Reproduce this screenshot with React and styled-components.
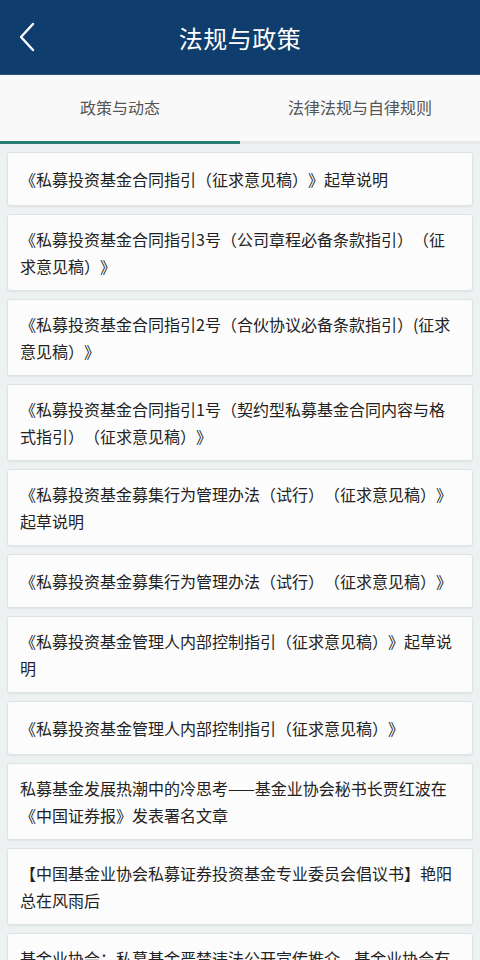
import { useState } from 'react'
import styled, { createGlobalStyle } from 'styled-components'

const GlobalStyle = createGlobalStyle`
  html, body {
    margin: 0;
    padding: 0;
    background: #eef1f1;
  }
  * {
    box-sizing: border-box;
  }
  body {
    font-family: "Noto Sans CJK SC", "Noto Sans", "Liberation Sans", sans-serif;
    text-spacing-trim: space-all;
  }
`

const Page = styled.div`
  width: 480px;
  min-height: 960px;
  display: flex;
  flex-direction: column;
  background: #eef1f1;
`

const Header = styled.header`
  height: 75px;
  background: #0f3e6e;
  display: flex;
  align-items: center;
  justify-content: center;
  position: relative;
  border-bottom: 1px solid #2a5580;
`

const BackButton = styled.button`
  position: absolute;
  left: 12px;
  top: 50%;
  transform: translateY(-50%);
  width: 32px;
  height: 40px;
  border: none;
  background: none;
  padding: 0;
  display: flex;
  align-items: center;
  justify-content: center;
  cursor: pointer;
`

const Title = styled.h1`
  margin: 0;
  color: #ffffff;
  font-size: 24px;
  font-weight: 400;
  letter-spacing: 0.5px;
`

const Tabs = styled.div`
  height: 69px;
  display: flex;
  background: #f9f9f9;
`

const Tab = styled.button`
  flex: 1;
  border: none;
  background: none;
  font-family: inherit;
  font-size: 16px;
  color: #555;
  display: flex;
  align-items: center;
  justify-content: center;
  position: relative;
  padding: 0 0 3px;
  border-bottom: 3px solid ${(p) => (p.$active ? '#2b7f76' : '#e6e9e9')};
  cursor: pointer;

  & + &::before {
    content: '';
    position: absolute;
    left: 0;
    top: 14px;
    bottom: 10px;
    width: 1px;
    background: #dcdfdf;
  }
`

const List = styled.div`
  display: flex;
  flex-direction: column;
  gap: 8px;
  padding: 8px 7px 8px 7px;
`

const Card = styled.div`
  min-height: 54px;
  background: #fcfcfc;
  border: 1px solid #dfe3e3;
  border-radius: 3px;
  box-shadow: 0 1px 2px rgba(0, 0, 0, 0.06);
  padding: 11px 20px 11px 12px;
  display: flex;
  align-items: center;
  font-size: 16px;
  line-height: 26.5px;
  color: #222;
  text-spacing-trim: space-all;
`

const items = [
  '《私募投资基金合同指引（征求意见稿）》起草说明',
  '《私募投资基金合同指引3号（公司章程必备条款指引）（征求意见稿）》',
  '《私募投资基金合同指引2号（合伙协议必备条款指引）(征求意见稿）》',
  '《私募投资基金合同指引1号（契约型私募基金合同内容与格式指引）（征求意见稿）》',
  '《私募投资基金募集行为管理办法（试行）（征求意见稿）》起草说明',
  '《私募投资基金募集行为管理办法（试行）（征求意见稿）》',
  '《私募投资基金管理人内部控制指引（征求意见稿）》起草说明',
  '《私募投资基金管理人内部控制指引（征求意见稿）》',
  '私募基金发展热潮中的冷思考——基金业协会秘书长贾红波在《中国证券报》发表署名文章',
  '【中国基金业协会私募证券投资基金专业委员会倡议书】艳阳总在风雨后',
  '基金业协会：私募基金严禁违法公开宣传推介—基金业协会有关负责人答记者问',
]

const ChevronLeft = () => (
  <svg width="20" height="30" viewBox="0 0 20 30" fill="none">
    <polyline
      points="15,2 3,15 15,28"
      stroke="#ffffff"
      strokeWidth="2.4"
      strokeLinecap="round"
      strokeLinejoin="round"
    />
  </svg>
)

const App = () => {
  const [tab, setTab] = useState(0)

  return (
    <Page>
      <GlobalStyle />
      <Header>
        <BackButton aria-label="back">
          <ChevronLeft />
        </BackButton>
        <Title>法规与政策</Title>
      </Header>
      <Tabs>
        <Tab $active={tab === 0} onClick={() => setTab(0)}>政策与动态</Tab>
        <Tab $active={tab === 1} onClick={() => setTab(1)}>法律法规与自律规则</Tab>
      </Tabs>
      <List>
        {items.map((text) => (
          <Card key={text}>{text}</Card>
        ))}
      </List>
    </Page>
  )
}

export default App
